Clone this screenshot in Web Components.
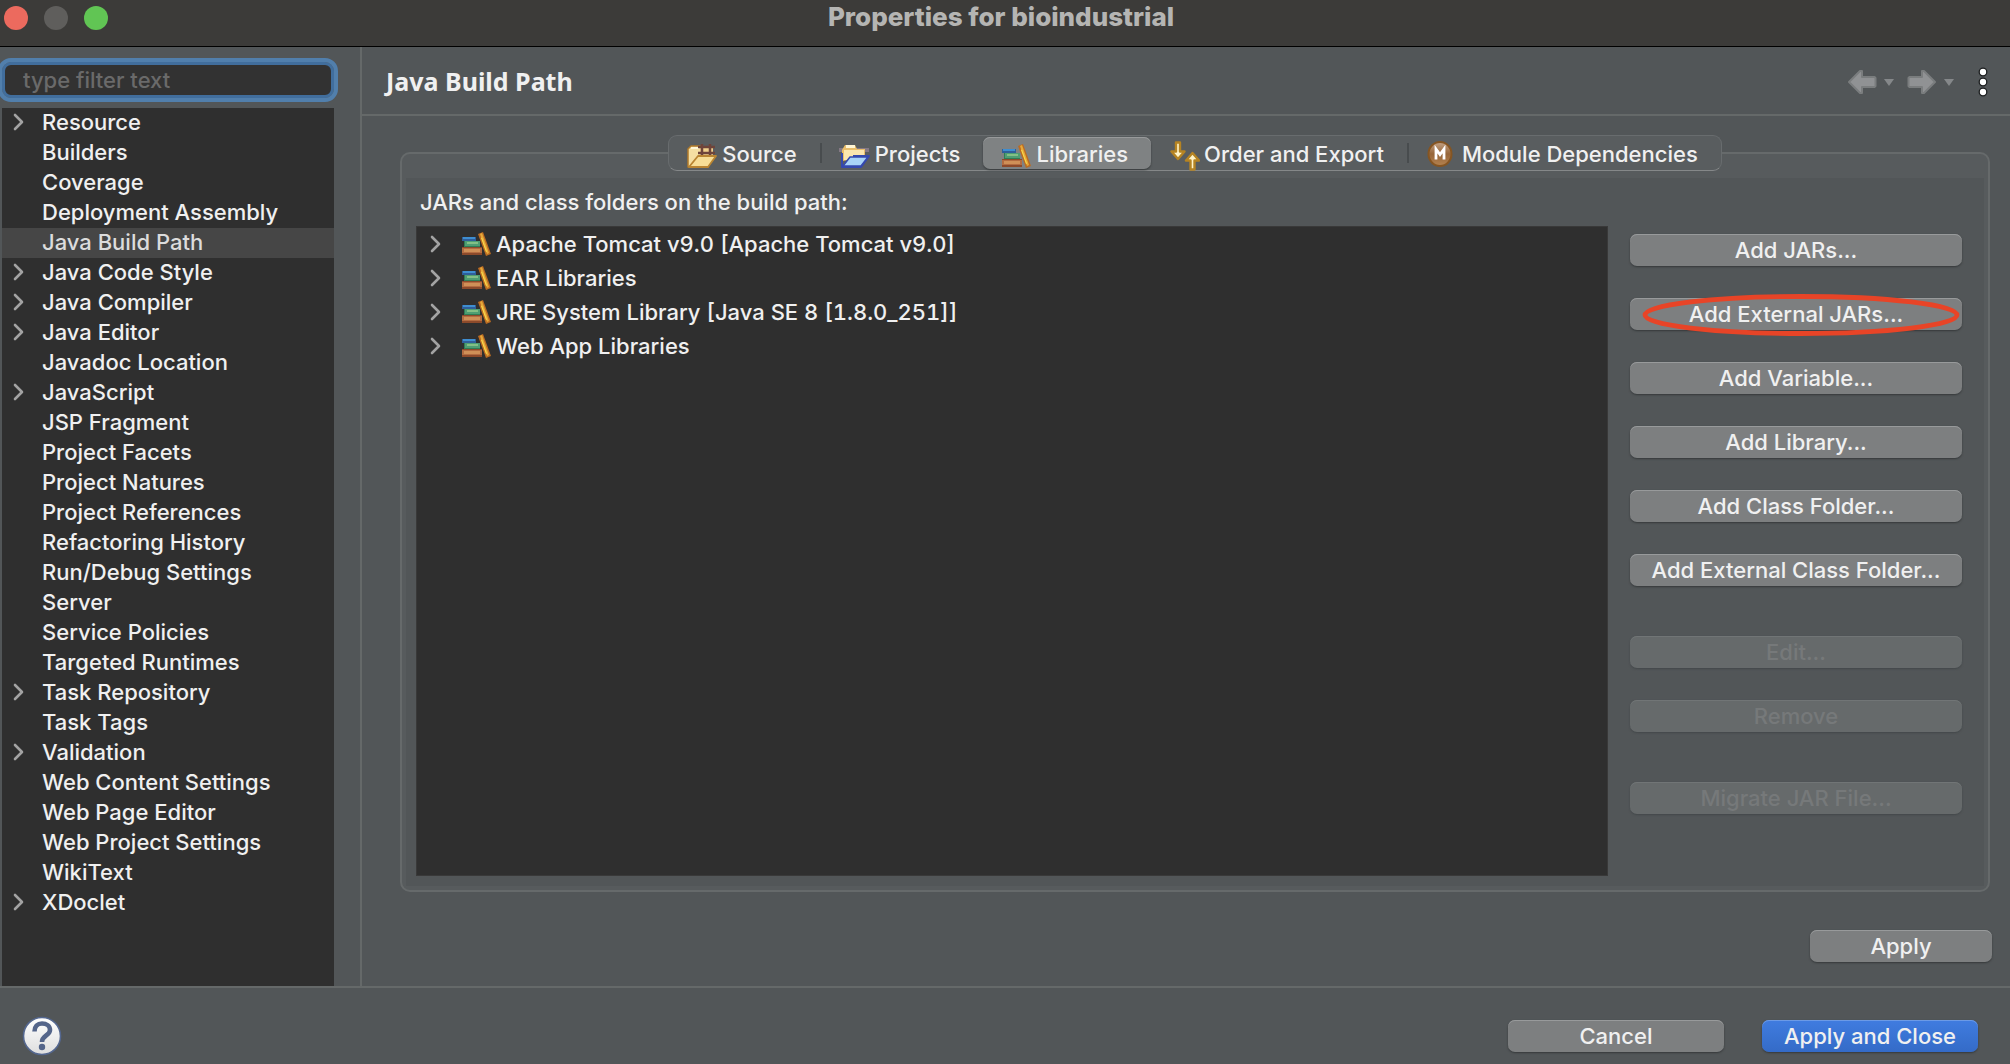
<!DOCTYPE html>
<html lang="en">
<head>
<meta charset="utf-8">
<title>Properties for bioindustrial</title>
<style>
  html, body { height: 100%; margin: 0; }
  body {
    font: 500 22px/30px Inter, "Liberation Sans", sans-serif;
    color: #f0f0f0;
    background: #525658;
    --line: #656969;
    --list: #2f2f2f;
  }
</style>
</head>
<body>
<properties-dialog heading="Properties for bioindustrial">
  <page-tree slot="side"></page-tree>
  <build-path-page slot="page"></build-path-page>
  <push-button slot="actions">Cancel</push-button>
  <push-button slot="actions" kind="primary">Apply and Close</push-button>
</properties-dialog>

<script>
const icons = {
  chevron: `<svg width="12" height="18" viewBox="0 0 12 18"><path d="M2 2l7 7-7 7" fill="none" stroke="#a3a3a3" stroke-width="2.6" stroke-linecap="round" stroke-linejoin="round"/></svg>`,
  books: `<svg width="32" height="24" viewBox="0 0 32 24">
    <path d="M2 5h14v4H2z" fill="#2f5f9a"/><path d="M3 5h12v2H3z" fill="#3f8ed0"/>
    <path d="M4 9h16v7H4z" fill="#2f7d55"/><path d="M5 9h15v5H5z" fill="#4f9e73"/><path d="M7 10h11v2H7z" fill="#83c086"/>
    <path d="M2 15h20v8H2z" fill="#8c4a2b"/><path d="M2 16h20v5H2z" fill="#b46c41"/><path d="M4 17h16v3H4z" fill="#cf9058"/>
    <path d="M18 2l5-2 8 22-5 2z" fill="#bb6c22"/><path d="M20 2l2-1 7 20-2 1z" fill="#e6a93a"/><path d="M21 6l1-.5 5 14-1 .5z" fill="#f9dc4d"/>
  </svg>`,
  source: `<svg width="32" height="24" viewBox="0 0 32 24">
    <path d="M2 23V5l3-3h9l1 3h9v8l-2 10z" fill="#f5dfa2" stroke="#b07a2b" stroke-width="1.500" stroke-linejoin="round"/>
    <path d="M5 3h8v2H5z" fill="#fff6d5"/>
    <path d="M14 2h13v11H14z" fill="#f0d08c"/>
    <path d="M16 0v13M24 0v12M12 3h17M12 9h17" stroke="#6e443a" stroke-width="2.500"/>
    <path d="M12 12h18l-8 11H3z" fill="#f7de96" stroke="#b98532" stroke-width="1.800" stroke-linejoin="round"/>
  </svg>`,
  projects: `<svg width="32" height="24" viewBox="0 0 32 24">
    <path d="M0 4h30v4H0z" fill="#857985"/>
    <path d="M3 17V6l3-5h10l2 4h8v9z" fill="#e9be6b"/><path d="M7 1h9v3H7z" fill="#fff6d5"/>
    <path d="M5 6h20v10H5z" fill="#fbe6ae"/>
    <path d="M3 9v14h19l8-11H14" fill="none" stroke="#3549ae" stroke-width="2" stroke-linejoin="round"/>
    <path d="M11 13h18l-7 9H4z" fill="#a9d4f7" stroke="#3549ae" stroke-width="1.500" stroke-linejoin="round"/>
  </svg>`,
  order: `<svg width="32" height="30" viewBox="0 0 32 30">
    <path d="M8 1.500h4v9h4.500L10 18l-6.500-7.500H8zM22.500 28.500h4v-9H31L24.500 12 18 19.500h4.500z" fill="#fff4c8" stroke="#b58322" stroke-width="2.400" stroke-linejoin="round"/>
  </svg>`,
  module: `<svg width="32" height="30" viewBox="0 0 32 30">
    <defs><linearGradient id="g" x2="0" y2="1"><stop stop-color="#c4a487"/><stop offset=".5" stop-color="#96663a"/><stop offset="1" stop-color="#b58350"/></linearGradient></defs>
    <ellipse cx="14" cy="15" rx="11.500" ry="12" fill="url(#g)" stroke="#855522" stroke-width="2"/>
    <path d="M10 20.500V10l4 5.500 4-5.500v10.500" fill="none" stroke="#fff" stroke-width="2.800"/>
  </svg>`,
  back: `<svg width="30" height="26" viewBox="0 0 30 26"><path d="M2 13L13 2h2v6h12.500l1 1v8l-1 1H15v6h-2z" fill="#909294" stroke="#7a7d7e" stroke-width="2" stroke-linejoin="round"/></svg>`,
  forward: `<svg width="30" height="26" viewBox="0 0 30 26"><path d="M28 13L17 2h-2v6H2.500l-1 1v8l1 1H15v6h2z" fill="#909294" stroke="#7a7d7e" stroke-width="2" stroke-linejoin="round"/></svg>`,
  down: `<svg width="10" height="8" viewBox="0 0 10 8"><path d="M0 1h10L5 8z" fill="#85888a"/></svg>`,
  dots: `<svg width="12" height="32" viewBox="0 0 12 32"><g fill="#fff" stroke="#1d1f20" stroke-width="1.300"><circle cx="6" cy="6" r="3.800"/><circle cx="6" cy="16" r="3.800"/><circle cx="6" cy="26" r="3.800"/></g></svg>`,
  help: `<svg width="40" height="40" viewBox="0 0 40 40">
    <defs><linearGradient id="h" x2="0" y2="1"><stop stop-color="#fff"/><stop offset="1" stop-color="#dedede"/></linearGradient></defs>
    <circle cx="20" cy="20" r="18.500" fill="url(#h)" stroke="#54678f" stroke-width="1.600"/>
    <path d="M12.500 15.500c0-5 3-8 7.500-8s8 2.500 8 6.500c0 5.500-8 5.500-8 12" fill="none" stroke="#54658a" stroke-width="4.600"/>
    <circle cx="20" cy="31" r="3.200" fill="#54658a"/>
  </svg>`
};

// shared base: every element clones its template into an open root
class BaseElement extends HTMLElement {
  constructor() {
    super();
    const template = document.createElement("template");
    template.innerHTML = this.render();
    this.attachShadow({ mode: "open" }).appendChild(template.content.cloneNode(true));
  }
}

customElements.define("push-button", class extends BaseElement {
  render() {
    return `
      <style>
        :host { display: block; min-width: 216px; }
        :host([kind="small"]) { min-width: 182px; }
        button {
          display: block;
          width: 100%;
          height: 32px;
          padding: 0;
          border: none;
          border-radius: 7px;
          font: inherit;
          color: #f0f0f0;
          background: #7d7f80;
          box-shadow: inset 0 1px #989a9b, 0 1px 2px #35383a;
        }
        button:disabled {
          color: #76797a;
          background: #666a6b;
          box-shadow: inset 0 1px #717576, 0 1px 2px #43474a;
        }
        :host([kind="primary"]) button {
          background: linear-gradient(#407ce0, #346bc7);
          box-shadow: inset 0 1px #6c9ae6, 0 1px 2px #35383a;
        }
      </style>
      <button type="button"><slot></slot></button>`;
  }
  connectedCallback() {
    this.shadowRoot.querySelector("button").disabled = this.hasAttribute("disabled");
  }
});

customElements.define("page-tree", class extends BaseElement {
  render() {
    // a leading "+" marks a page that has children
    const pages = ["+Resource", "Builders", "Coverage", "Deployment Assembly", "Java Build Path",
      "+Java Code Style", "+Java Compiler", "+Java Editor", "Javadoc Location", "+JavaScript",
      "JSP Fragment", "Project Facets", "Project Natures", "Project References",
      "Refactoring History", "Run/Debug Settings", "Server", "Service Policies",
      "Targeted Runtimes", "+Task Repository", "Task Tags", "+Validation",
      "Web Content Settings", "Web Page Editor", "Web Project Settings", "WikiText", "+XDoclet"];
    const rows = pages.map((page) => {
      const open = page.startsWith("+");
      const name = page.replace("+", "");
      return `<li role="treeitem"${name === "Java Build Path" ? ' aria-selected="true"' : ""}><i>${open ? icons.chevron : ""}</i>${name}</li>`;
    });
    return `
      <style>
        :host { display: flex; flex-direction: column; height: 100%; box-sizing: border-box; padding: 15px 26px 0 2px; }
        input {
          flex: none;
          box-sizing: border-box;
          height: 36px;
          margin: 0 0 10px;
          padding: 0 18px;
          border: 3px solid #416e9d;
          border-radius: 9px;
          outline: 4px solid #517fac;
          font: inherit;
          color: #f0f0f0;
          background: #323232;
        }
        input::placeholder { color: #6a6a6a; opacity: 1; }
        ul { flex: 1; margin: 0; padding: 0; list-style: none; background: var(--list); }
        li { display: flex; align-items: center; height: 28px; padding-bottom: 2px; white-space: nowrap; }
        li[aria-selected] { color: #dcdcdc; background: #464646; }
        i { display: flex; width: 29px; padding-left: 11px; }
      </style>
      <input type="text" aria-label="Filter" placeholder="type filter text">
      <ul role="tree">${rows.join("")}</ul>`;
  }
});

customElements.define("tab-strip", class extends BaseElement {
  render() {
    return `
      <style>
        :host {
          display: flex;
          box-sizing: border-box;
          height: 36px;
          padding: 1px 0;
          border: 1px solid #686c6e;
          border-bottom-color: #858889;
          border-radius: 9px;
          background: #595d5f;
        }
      </style>
      <slot></slot>`;
  }
});

customElements.define("tab-item", class extends BaseElement {
  render() {
    return `
      <style>
        :host { display: flex; align-items: center; }
        :host([divider])::after { content: ""; width: 2px; height: 20px; background: #484c4e; }
        button {
          display: flex;
          align-items: center;
          gap: 4px;
          height: 32px;
          padding: 2px 23px 0 17px;
          border: none;
          border-radius: 7px;
          font: inherit;
          color: inherit;
          background: none;
        }
        svg { margin-top: 4px; }
        :host([icon="module"]) svg { margin-top: 0; }
        :host([selected]) button { background: #7f8283; box-shadow: inset 0 1px #989a9b, 0 1px 2px #35383a; }
      </style>
      <button type="button" role="tab">${icons[this.getAttribute("icon")]}<slot></slot></button>`;
  }
});

customElements.define("library-list", class extends BaseElement {
  render() {
    const libraries = ["Apache Tomcat v9.0 [Apache Tomcat v9.0]", "EAR Libraries",
      "JRE System Library [Java SE 8 [1.8.0_251]]", "Web App Libraries"];
    return `
      <style>
        :host { display: block; border: 1px solid #393939; background: var(--list); }
        ul { margin: 0; padding: 0; list-style: none; font-variant-numeric: tabular-nums; }
        li { display: flex; align-items: center; height: 34px; }
        .chevron { display: flex; width: 30px; padding-left: 13px; }
        .books { display: flex; width: 36px; }
      </style>
      <ul role="tree">${libraries.map((name) => `
        <li role="treeitem"><span class="chevron">${icons.chevron}</span><span class="books">${icons.books}</span>${name}</li>`).join("")}
      </ul>`;
  }
});

customElements.define("build-path-page", class extends BaseElement {
  render() {
    return `
      <style>
        :host { display: flex; flex-direction: column; height: 100%; }
        header {
          display: flex;
          align-items: center;
          flex: none;
          height: 67px;
          padding: 0 21px 0 24px;
          border-bottom: 2px solid var(--line);
        }
        h1 { flex: 1; margin: 0; font: bold 25px/30px "Noto Sans", "Open Sans", sans-serif; }
        nav { display: flex; align-items: center; padding-top: 3px; }
        nav button { display: flex; padding: 0; border: none; background: none; }
        nav button + button { margin-left: 7px; }
        nav button.next { margin-left: 13px; }
        nav button.menu { margin-left: 23px; }
        .group {
          flex: 1;
          display: flex;
          flex-direction: column;
          margin: 36px 20px 0 38px;
          padding: 0 4px 4px;
          border: 2px solid #666a6b;
          border-radius: 10px;
          background: #575b5d;
        }
        tab-strip { align-self: center; margin-top: -19px; margin-bottom: 7px; }
        .content {
          flex: 1;
          display: grid;
          grid-template: 48px 1fr / 1fr 332px;
          column-gap: 22px;
          padding: 0 22px 10px 10px;
          background: #525658;
        }
        .content label { grid-column: 1 / 3; padding: 9px 4px 0; }
        .buttons { display: flex; flex-direction: column; gap: 32px; padding-top: 8px; }
        .space { margin-top: 18px; }
        .marked { position: relative; }
        .marked svg { position: absolute; left: 12px; top: -4px; width: 318px; height: 42px; pointer-events: none; }
        footer { display: flex; justify-content: flex-end; padding: 38px 18px 24px; }
      </style>
      <header>
        <h1>Java Build Path</h1>
        <nav>
          <button type="button" aria-label="Back">${icons.back}</button>
          <button type="button" aria-label="Back history">${icons.down}</button>
          <button type="button" class="next" aria-label="Forward">${icons.forward}</button>
          <button type="button" aria-label="Forward history">${icons.down}</button>
          <button type="button" class="menu" aria-label="View menu">${icons.dots}</button>
        </nav>
      </header>
      <div class="group">
        <tab-strip role="tablist">
          <tab-item icon="source" divider>Source</tab-item>
          <tab-item icon="projects">Projects</tab-item>
          <tab-item icon="books" selected>Libraries</tab-item>
          <tab-item icon="order" divider>Order and Export</tab-item>
          <tab-item icon="module">Module Dependencies</tab-item>
        </tab-strip>
        <div class="content">
          <label>JARs and class folders on the build path:</label>
          <library-list></library-list>
          <div class="buttons">
            <push-button>Add JARs...</push-button>
            <div class="marked">
              <push-button>Add External JARs...</push-button>
              <svg viewBox="0 0 318 42"><ellipse cx="159" cy="21" rx="156" ry="18.500" fill="none" stroke="#e84427" stroke-width="4.800"/></svg>
            </div>
            <push-button>Add Variable...</push-button>
            <push-button>Add Library...</push-button>
            <push-button>Add Class Folder...</push-button>
            <push-button>Add External Class Folder...</push-button>
            <push-button class="space" disabled>Edit...</push-button>
            <push-button disabled>Remove</push-button>
            <push-button class="space" disabled>Migrate JAR File...</push-button>
          </div>
        </div>
      </div>
      <footer><push-button kind="small">Apply</push-button></footer>`;
  }
});

customElements.define("properties-dialog", class extends BaseElement {
  render() {
    return `
      <style>
        :host { display: grid; grid-template: 47px 1fr 78px / 360px 1fr; min-height: 100vh; }
        .title {
          grid-column: 1 / 3;
          display: grid;
          grid-template-columns: 1fr auto 1fr;
          box-sizing: border-box;
          padding: 2px 12px 0 4px;
          border-bottom: 1px solid #000;
          background: #3c3b39;
        }
        .title h2 { margin: 0; font: 800 26px/30px Inter, sans-serif; color: #b5b5b3; }
        .lights { display: flex; gap: 16px; padding-top: 4px; }
        .lights button { width: 24px; height: 24px; padding: 0; border: none; border-radius: 50%; background: #ec6a5e; }
        .lights button:nth-child(2) { background: #5f5e5c; }
        .lights button:nth-child(3) { background: #61c554; }
        .page { border-left: 2px solid var(--line); min-width: 0; }
        .bar {
          grid-column: 1 / 3;
          display: flex;
          align-items: center;
          box-sizing: border-box;
          padding: 20px 32px 0 22px;
          border-top: 2px solid var(--line);
        }
        .help { display: flex; margin-right: auto; padding: 0; border: none; background: none; }
        .actions { display: flex; gap: 38px; }
      </style>
      <div class="title">
        <div class="lights">
          <button type="button" aria-label="Close"></button>
          <button type="button" aria-label="Minimize"></button>
          <button type="button" aria-label="Zoom"></button>
        </div>
        <h2></h2>
      </div>
      <div class="side"><slot name="side"></slot></div>
      <div class="page"><slot name="page"></slot></div>
      <div class="bar">
        <button type="button" class="help" aria-label="Help">${icons.help}</button>
        <div class="actions"><slot name="actions"></slot></div>
      </div>`;
  }
  connectedCallback() {
    this.shadowRoot.querySelector("h2").textContent = this.getAttribute("heading");
  }
});
</script>
</body>
</html>
